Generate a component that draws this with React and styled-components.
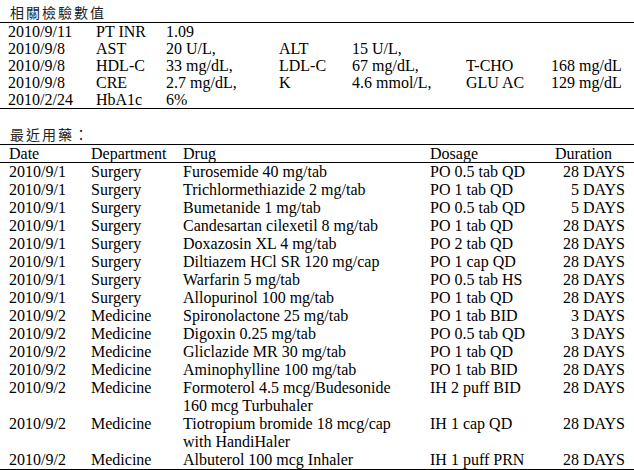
import React from "react";
import styled, { createGlobalStyle } from "styled-components";

const GlobalStyle = createGlobalStyle`
  html, body {
    margin: 0;
    padding: 0;
    background: #ffffff;
  }
  body {
    font-family: "Liberation Serif", "Times New Roman", serif;
    color: #000;
  }
`;

const Page = styled.div`
  width: 634px;
  height: 470px;
  overflow: hidden;
  background: #fff;
`;

const SectionTitle = styled.div`
  font-family: "Noto Sans CJK TC", "Noto Sans CJK SC", sans-serif;
  font-size: 14px;
  line-height: 19px;
  letter-spacing: 2px;
  color: #222;
  padding: ${(p) => p.$top || 3}px 0 0 10px;
`;

const LabTable = styled.div`
  display: grid;
  grid-template-columns: 88px 70px 113px 73px 114px 85px 1fr;
  padding-left: 8px;
  border-top: 1px solid #000;
  border-bottom: 1px solid #000;
  font-size: 16px;
  line-height: 17px;
  white-space: nowrap;
`;

const MedTable = styled.div`
  border-top: 1px solid #000;
  border-bottom: 1px solid #000;
  font-size: 16px;
`;

const MedRow = styled.div`
  display: grid;
  grid-template-columns: 82px 92px 247px 125px 70px;
  padding: 0 9px;
  line-height: ${(p) => (p.$head ? 17 : 18)}px;
  border-bottom: ${(p) => (p.$head ? "1px solid #000" : "none")};
`;

const Cell = styled.div`
  white-space: nowrap;
  text-align: ${(p) => (p.$right ? "right" : "left")};
`;

const DrugCell = styled.div`
  padding-right: 25px;
`;

const labs = [
  ["2010/9/11", "PT INR", "1.09"],
  ["2010/9/8", "AST", "20 U/L,", "ALT", "15 U/L,"],
  ["2010/9/8", "HDL-C", "33 mg/dL,", "LDL-C", "67 mg/dL,", "T-CHO", "168 mg/dL"],
  ["2010/9/8", "CRE", "2.7 mg/dL,", "K", "4.6 mmol/L,", "GLU AC", "129 mg/dL"],
  ["2010/2/24", "HbA1c", "6%"],
];

const meds = [
  ["2010/9/1", "Surgery", "Furosemide 40 mg/tab", "PO 0.5 tab QD", "28 DAYS"],
  ["2010/9/1", "Surgery", "Trichlormethiazide 2 mg/tab", "PO 1 tab QD", "5 DAYS"],
  ["2010/9/1", "Surgery", "Bumetanide 1 mg/tab", "PO 0.5 tab QD", "5 DAYS"],
  ["2010/9/1", "Surgery", "Candesartan cilexetil 8 mg/tab", "PO 1 tab QD", "28 DAYS"],
  ["2010/9/1", "Surgery", "Doxazosin XL 4 mg/tab", "PO 2 tab QD", "28 DAYS"],
  ["2010/9/1", "Surgery", "Diltiazem HCl SR 120 mg/cap", "PO 1 cap QD", "28 DAYS"],
  ["2010/9/1", "Surgery", "Warfarin 5 mg/tab", "PO 0.5 tab HS", "28 DAYS"],
  ["2010/9/1", "Surgery", "Allopurinol 100 mg/tab", "PO 1 tab QD", "28 DAYS"],
  ["2010/9/2", "Medicine", "Spironolactone 25 mg/tab", "PO 1 tab BID", "3 DAYS"],
  ["2010/9/2", "Medicine", "Digoxin 0.25 mg/tab", "PO 0.5 tab QD", "3 DAYS"],
  ["2010/9/2", "Medicine", "Gliclazide MR 30 mg/tab", "PO 1 tab QD", "28 DAYS"],
  ["2010/9/2", "Medicine", "Aminophylline 100 mg/tab", "PO 1 tab BID", "28 DAYS"],
  ["2010/9/2", "Medicine", "Formoterol 4.5 mcg/Budesonide 160 mcg Turbuhaler", "IH 2 puff BID", "28 DAYS"],
  ["2010/9/2", "Medicine", "Tiotropium bromide 18 mcg/cap with HandiHaler", "IH 1 cap QD", "28 DAYS"],
  ["2010/9/2", "Medicine", "Albuterol 100 mcg Inhaler", "IH 1 puff PRN", "28 DAYS"],
];

const App = () => {
  return (
    <Page>
      <GlobalStyle />
      <SectionTitle>相關檢驗數值</SectionTitle>
      <LabTable>
        {labs.map((row, i) =>
          Array.from({ length: 7 }).map((_, j) => (
            <Cell key={i + "-" + j}>{row[j] || ""}</Cell>
          ))
        )}
      </LabTable>

      <SectionTitle $top={16}>最近用藥：</SectionTitle>
      <MedTable>
        <MedRow $head>
          <Cell>Date</Cell>
          <Cell>Department</Cell>
          <Cell>Drug</Cell>
          <Cell>Dosage</Cell>
          <Cell>Duration</Cell>
        </MedRow>
        {meds.map((m, i) => (
          <MedRow key={i}>
            <Cell>{m[0]}</Cell>
            <Cell>{m[1]}</Cell>
            <DrugCell>{m[2]}</DrugCell>
            <Cell>{m[3]}</Cell>
            <Cell $right>{m[4]}</Cell>
          </MedRow>
        ))}
      </MedTable>
    </Page>
  );
};

export default App;
